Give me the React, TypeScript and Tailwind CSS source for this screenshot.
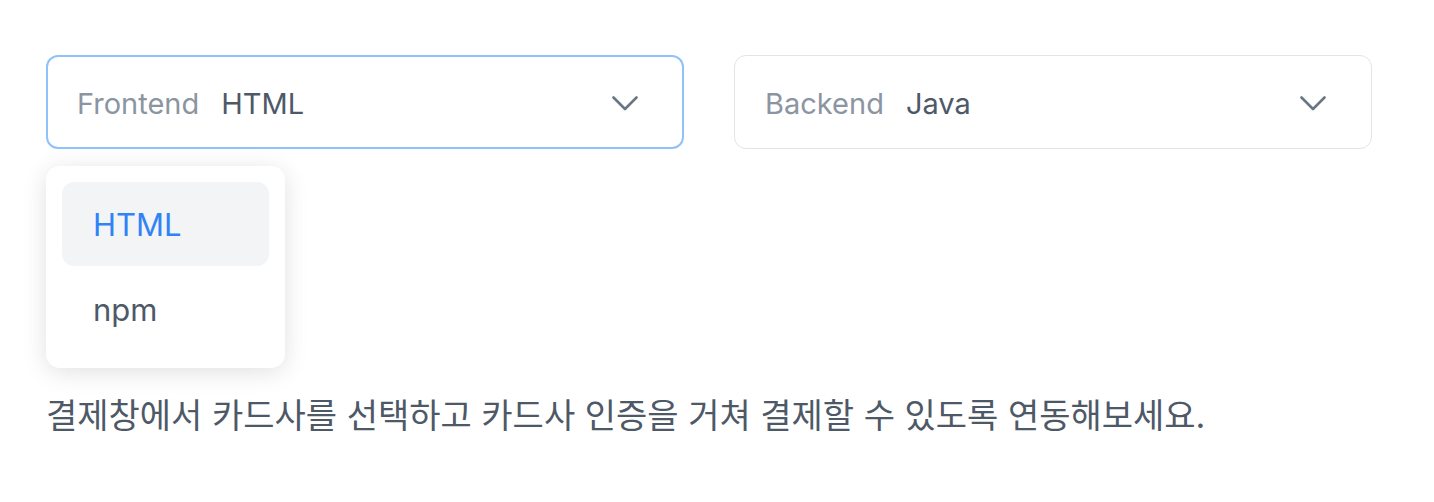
const font = "font-['Inter','Noto_Sans_CJK_KR',sans-serif]";

function Chevron() {
  return (
    <svg viewBox="0 0 26 15" className="h-[15px] w-[26px]" fill="none">
      <path d="M1.5 1.5 13 13 24.5 1.5" stroke="#6b7684" strokeWidth="2.6" strokeLinecap="round" strokeLinejoin="round" />
    </svg>
  );
}

function Select({ label, value, active }: { label: string; value: string; active?: boolean }) {
  return (
    <div
      className={`flex h-[94px] w-[638px] items-center justify-between rounded-[12px] bg-white pt-[3px] ${
        active ? 'border-2 border-[#90c2f9] pl-[29px] pr-[44px]' : 'border border-[#e1e4e8] pl-[30px] pr-[45px]'
      }`}
    >
      <div className="flex items-center text-[29px]">
        <span className="text-[#8b95a1]">{label}</span>
        <span className="ml-[22px] text-[#4e5968]">{value}</span>
      </div>
      <Chevron />
    </div>
  );
}

export default function App() {
  return (
    <div className={`min-h-[502px] w-full bg-white px-[46px] pt-[55px] ${font}`}>
      <div className="relative flex gap-[50px]">
        <Select label="Frontend" value="HTML" active />
        <Select label="Backend" value="Java" />

        {/* dropdown menu under the first select */}
        <div className="absolute left-0 top-[111px] z-10 w-[239px] rounded-[14px] bg-white p-[16px] shadow-[0_4px_24px_rgba(0,0,0,0.12)]">
          <div className="flex h-[84px] items-center rounded-[12px] bg-[#f2f4f6] px-[31px] pt-[3px] text-[31px] text-[#3182f6]">
            HTML
          </div>
          <div className="flex h-[86px] items-center px-[31px] pt-[3px] text-[31px] text-[#4e5968]">npm</div>
        </div>
      </div>

      <p className="mt-[247px] text-[34px] leading-[40px] text-[#4e5968]">
        결제창에서 카드사를 선택하고 카드사 인증을 거쳐 결제할 수 있도록 연동해보세요.
      </p>
    </div>
  );
}
